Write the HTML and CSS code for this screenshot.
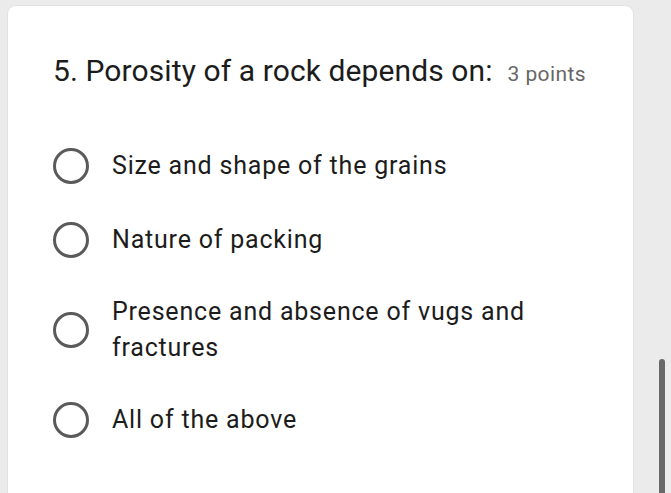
FILE: index.html
```html
<!DOCTYPE html>
<html lang="en">
<head>
<meta charset="utf-8">
<title>Question 5</title>
<link rel="stylesheet" href="styles.css">
</head>
<body>
<div class="page">
  <div class="card">
    <div class="title">
      <span class="question">5. Porosity of a rock depends on:</span>
      <span class="points">3 points</span>
    </div>
    <div class="options">
      <label class="option"><span class="radio"></span><span class="label">Size and shape of the grains</span></label>
      <label class="option"><span class="radio"></span><span class="label">Nature of packing</span></label>
      <label class="option"><span class="radio"></span><span class="label">Presence and absence of vugs and fractures</span></label>
      <label class="option"><span class="radio"></span><span class="label">All of the above</span></label>
    </div>
  </div>
  <div class="scrollbar"></div>
</div>
</body>
</html>
```

FILE: styles.css
```css
html, body {
  margin: 0;
  padding: 0;
  height: 100%;
  background: #ebebeb;
  overflow: hidden;
}
.page {
  position: relative;
  height: 100%;
  box-sizing: border-box;
  padding: 5px 37px 0 7px;
  display: flex;
}
.card {
  flex: 1;
  background: #fff;
  border: 1px solid #e2e2e2;
  border-bottom: none;
  border-radius: 9px 9px 0 0;
  padding: 47px 40px 0 45px;
  font-family: Roboto, "Noto Sans", sans-serif;
  color: #1c1c1c;
}
.title {
  display: flex;
  align-items: baseline;
  gap: 15px;
  line-height: 36px;
}
.question {
  font-size: 30px;
  letter-spacing: 0.1px;
}
.points {
  font-size: 21px;
  letter-spacing: 0.4px;
  color: #666;
}
.options {
  margin-top: 54px;
  display: flex;
  flex-direction: column;
  gap: 34px;
}
.option {
  display: flex;
  align-items: center;
  gap: 23px;
  min-height: 40px;
}
.radio {
  flex: none;
  width: 36px;
  height: 36px;
  box-sizing: border-box;
  border: 3.5px solid #5a5a5a;
  border-radius: 50%;
}
.label {
  font-size: 25px;
  letter-spacing: 0.8px;
  line-height: 36px;
  max-width: 440px;
}
.scrollbar {
  position: absolute;
  left: 659px;
  top: 359px;
  bottom: 0;
  width: 6px;
  border-radius: 3px 3px 0 0;
  background: #686868;
}
```
